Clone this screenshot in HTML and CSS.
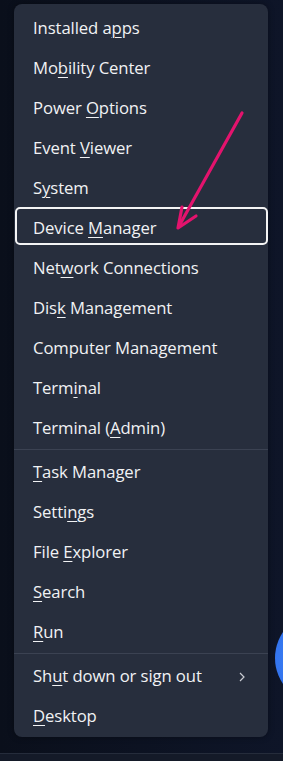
FILE: index.html
```html
<!DOCTYPE html>
<html lang="en">
<head>
    <meta charset="UTF-8">
    <meta name="viewport" content="width=device-width, initial-scale=1.0">
    <title>Quick Link menu</title>
    <link rel="stylesheet" href="styles.css">
</head>
<body>
    <div class="desktop">
        <div class="orb"></div>

        <nav class="menu">
            <div class="item">Installed a<u>p</u>ps</div>
            <div class="item">Mo<u>b</u>ility Center</div>
            <div class="item">Power <u>O</u>ptions</div>
            <div class="item">Event <u>V</u>iewer</div>
            <div class="item">S<u>y</u>stem</div>
            <div class="item selected">Device <u>M</u>anager</div>
            <div class="item">Net<u>w</u>ork Connections</div>
            <div class="item">Dis<u>k</u> Management</div>
            <div class="item">Computer Management</div>
            <div class="item">Term<u>i</u>nal</div>
            <div class="item">Terminal (<u>A</u>dmin)</div>
            <div class="sep"></div>
            <div class="item"><u>T</u>ask Manager</div>
            <div class="item">Setti<u>n</u>gs</div>
            <div class="item">File <u>E</u>xplorer</div>
            <div class="item"><u>S</u>earch</div>
            <div class="item"><u>R</u>un</div>
            <div class="sep"></div>
            <div class="item has-sub">
                <span>Sh<u>u</u>t down or sign out</span>
                <svg class="chevron" width="8" height="12" viewBox="0 0 8 12">
                    <path d="M2 2 L6 6 L2 10" fill="none" stroke="#c9ccd3" stroke-width="1.2"/>
                </svg>
            </div>
            <div class="item"><u>D</u>esktop</div>
        </nav>

        <!-- pointer drawn over the screenshot -->
        <svg class="pointer" width="283" height="260" viewBox="0 0 283 260">
            <path d="M242 113 L179 226" stroke="#e3136d" stroke-width="3.2" stroke-linecap="round" fill="none"/>
            <path d="M182 207 L178 228 L196 216" stroke="#e3136d" stroke-width="3.2" stroke-linecap="round" stroke-linejoin="round" fill="none"/>
        </svg>
    </div>

    <div class="taskbar"></div>
</body>
</html>
```

FILE: styles.css
```css
:root {
    --menu-bg: #272e3d;
    --menu-line: #3b4252;
    --text-color: #f1f2f4;
    --accent-color: #e3136d;
}

body {
    margin: 0;
    height: 761px;
    overflow: hidden;
    background: linear-gradient(90deg, #0a0f1b 0%, #0e1528 100%);
    font-family: "Open Sans", "Noto Sans", sans-serif;
    color: var(--text-color);
}

.desktop {
    position: relative;
    height: 753px;
    padding-top: 4px;
    box-sizing: border-box;
    overflow: hidden;
}

.menu {
    position: relative;
    width: 254px;
    margin-left: 14px;
    padding: 4px 0 1px;
    background: var(--menu-bg);
    border-radius: 8px;
    box-shadow: 0 0 6px rgba(0,0,0,0.35);
}

.item {
    height: 40px;
    line-height: 40px;
    padding: 0 22px 0 19px;
    font-size: 16.7px;
    letter-spacing: -0.1px;
    white-space: nowrap;
}

.item u {
    text-decoration-thickness: 1px;
    text-underline-offset: 3px;
}

.item.has-sub {
    display: flex;
    align-items: center;
    justify-content: space-between;
}

.item.selected {
    box-sizing: border-box;
    height: 38px;
    line-height: 38px;
    margin: 0 0 2px 1px;
    padding-left: 16px;
    border: 2px solid #f4f4f4;
    border-radius: 5px;
    position: relative;
    top: -1px;
}

.chevron {
    margin-top: 1px;
}

.sep {
    height: 1px;
    margin: 1px 0 2px;
    background: var(--menu-line);
}

.pointer {
    position: absolute;
    left: 0;
    top: 0;
}

.orb {
    position: absolute;
    left: 275px;
    top: 612px;
    width: 92px;
    height: 92px;
    border-radius: 50%;
    background: radial-gradient(circle at 30% 50%, #3d82f7 0%, #2a68e6 70%, #2157d0 100%);
}

.taskbar {
    height: 8px;
    border-top: 1px solid #252c3b;
    background: #141a28;
}
```
